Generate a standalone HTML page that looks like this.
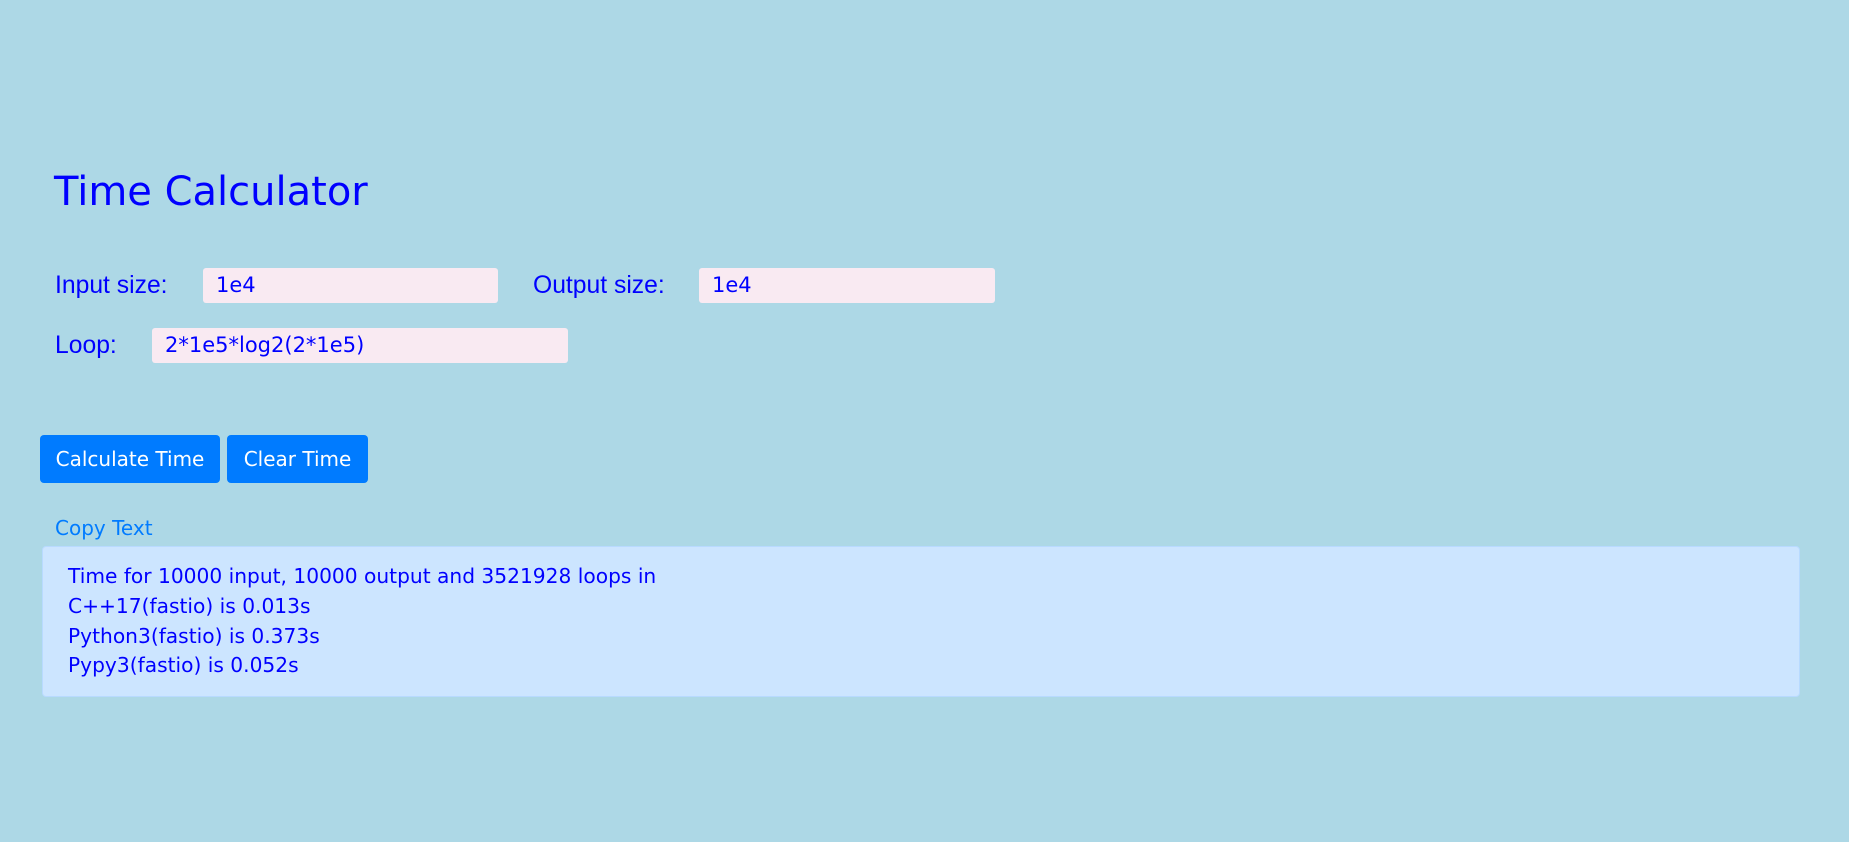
<!DOCTYPE html>
<html><head><meta charset="utf-8"><style>
html,body{margin:0;padding:0;}
body{width:1849px;height:842px;background:#add8e6;position:relative;overflow:hidden;font-family:"DejaVu Sans",Verdana,sans-serif;color:#0000ff;}
.a{position:absolute;white-space:nowrap;}
h1{position:absolute;margin:0;left:54px;top:164px;font-size:40px;font-weight:normal;line-height:56px;color:#0000ff;}
.lbl{font-family:"Liberation Sans",Arial,sans-serif;font-size:24.7px;line-height:35px;}
.inp{position:absolute;background:#f9eaf2;border-radius:3px;height:35px;line-height:35px;font-size:21px;box-sizing:border-box;padding-left:13px;}
.btn{position:absolute;background:#007bff;color:#fff;border-radius:4px;height:48px;line-height:48px;font-size:20px;text-align:center;top:435px;}
.box{position:absolute;left:42px;top:546px;width:1758px;height:151px;background:#cce5ff;border:1px solid #b8daff;border-radius:4px;box-sizing:border-box;}
.box div{position:absolute;left:25px;font-size:20.2px;line-height:30px;white-space:nowrap;}
</style></head><body>
<h1>Time Calculator</h1>
<div class="a lbl" style="left:55px;top:268px;">Input size:</div>
<div class="inp" style="left:203px;top:268px;width:295px;">1e4</div>
<div class="a lbl" style="left:533px;top:268px;">Output size:</div>
<div class="inp" style="left:699px;top:268px;width:296px;">1e4</div>
<div class="a lbl" style="left:55px;top:328px;">Loop:</div>
<div class="inp" style="left:152px;top:328px;width:416px;">2*1e5*log2(2*1e5)</div>
<div class="btn" style="left:40px;width:180px;">Calculate Time</div>
<div class="btn" style="left:227px;width:141px;">Clear Time</div>
<div class="a" style="left:55px;top:513px;font-size:20px;line-height:30px;color:#007bff;">Copy Text</div>
<div class="box">
<div style="top:14px;">Time for 10000 input, 10000 output and 3521928 loops in</div>
<div style="top:44px;">C++17(fastio) is 0.013s</div>
<div style="top:74px;">Python3(fastio) is 0.373s</div>
<div style="top:103px;">Pypy3(fastio) is 0.052s</div>
</div>
</body></html>
